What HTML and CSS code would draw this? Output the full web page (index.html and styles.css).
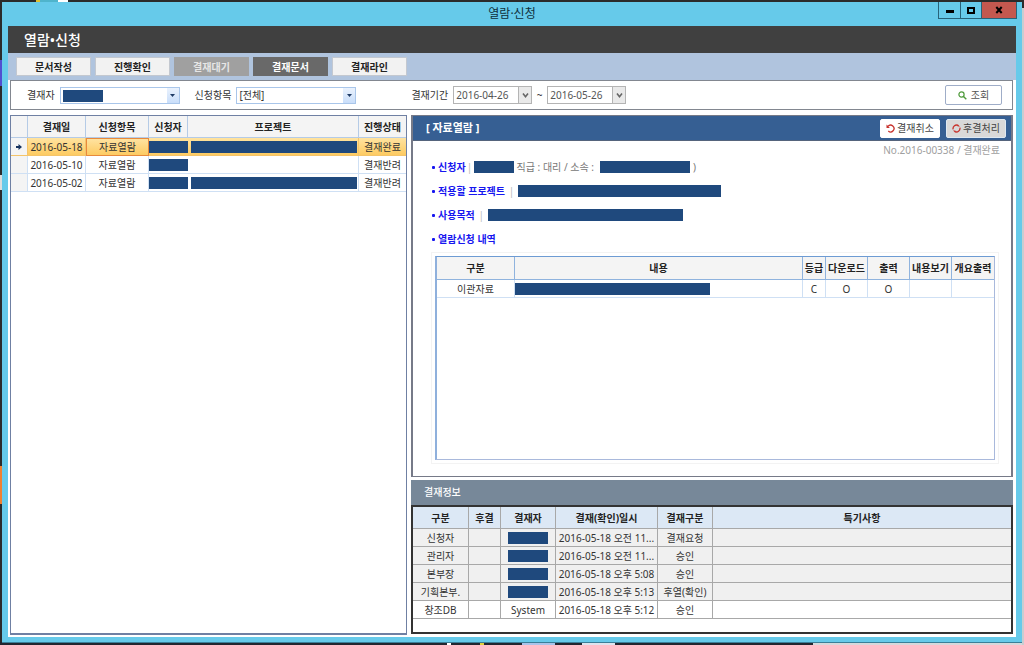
FILE: index.html
```html
<!DOCTYPE html>
<html lang="ko">
<head>
<meta charset="utf-8">
<title>열람·신청</title>
<link rel="stylesheet" href="styles.css">
</head>
<body>
<div class="window">
  <header class="titlebar">
    <span class="titlebar-text">열람·신청</span>
    <div class="caption">
      <button class="cap cap-min" aria-label="최소화"><svg width="8" height="8" viewBox="0 0 8 8"><rect y="4" width="8" height="3" fill="#000"/></svg></button>
      <button class="cap cap-max" aria-label="최대화"><svg width="8" height="7" viewBox="0 0 8 7"><rect x="1" y="1" width="6" height="5" fill="none" stroke="#000" stroke-width="2"/></svg></button>
      <button class="cap cap-close" aria-label="닫기"><svg width="8" height="8" viewBox="0 0 8 8"><path d="M1.300 1l5.400 6M6.700 1L1.300 7" stroke="#000" stroke-width="2"/></svg></button>
    </div>
  </header>
  <main class="client">
    <h1 class="page-title">열람•신청</h1>
    <nav class="tabs">
      <button class="tab">문서작성</button>
      <button class="tab">진행확인</button>
      <button class="tab tab-muted">결재대기</button>
      <button class="tab tab-active">결재문서</button>
      <button class="tab">결재라인</button>
    </nav>
    <div class="content">
      <form class="filter">
        <label for="approver">결재자</label>
        <span class="combo">
          <select id="approver"><option></option></select>
          <span class="redact redact-combo"></span>
          <span class="combo-arrow"><svg width="5" height="3" viewBox="0 0 5 3"><path d="M0 0h5L2.500 3z" fill="#1f3b66"/></svg></span>
        </span>
        <label class="label-item" for="item">신청항목</label>
        <span class="combo">
          <select id="item"><option>[전체]</option></select>
          <span class="combo-arrow"><svg width="5" height="3" viewBox="0 0 5 3"><path d="M0 0h5L2.500 3z" fill="#1f3b66"/></svg></span>
        </span>
        <label class="label-period" for="from">결재기간</label>
        <span class="date"><input id="from" value="2016-04-26"><button type="button" aria-label="시작일 선택"><svg width="7" height="5" viewBox="0 0 7 5"><path d="M1 .5l2.500 3.200L6 .5" fill="none" stroke="#666" stroke-width="1.600"/></svg></button></span>
        <span class="tilde">~</span>
        <span class="date"><input id="to" aria-label="종료일" value="2016-05-26"><button type="button" aria-label="종료일 선택"><svg width="7" height="5" viewBox="0 0 7 5"><path d="M1 .5l2.500 3.200L6 .5" fill="none" stroke="#666" stroke-width="1.600"/></svg></button></span>
        <button class="search" type="button"><svg width="9" height="9" viewBox="0 0 9 9"><circle cx="3.500" cy="3.500" r="2.600" fill="none" stroke="#4f9a3c" stroke-width="1.200"/><path d="M5.500 5.500L8.300 8.300" stroke="#4f9a3c" stroke-width="1.400"/></svg>조회</button>
      </form>
      <div class="split">
        <section class="list">
          <table class="grid list-grid">
            <colgroup><col class="w17"><col class="w58"><col class="w63"><col class="w39"><col><col class="w47"></colgroup>
            <thead><tr><th></th><th>결재일</th><th>신청항목</th><th>신청자</th><th>프로젝트</th><th>진행상태</th></tr></thead>
            <tbody>
              <tr class="selected"><td class="mark"><svg width="6" height="6" viewBox="0 0 6 6"><path d="M0 2h2.500V0L6 3 2.500 6V4H0z" fill="#16335f"/></svg></td><td>2016-05-18</td><td class="focus">자료열람</td><td class="block"><span class="redact"></span></td><td class="block block-inset"><span class="redact"></span></td><td>결재완료</td></tr>
              <tr><td class="mark"></td><td>2016-05-10</td><td>자료열람</td><td class="block"><span class="redact"></span></td><td></td><td>결재반려</td></tr>
              <tr><td class="mark"></td><td>2016-05-02</td><td>자료열람</td><td class="block"><span class="redact"></span></td><td class="block block-inset"><span class="redact"></span></td><td>결재반려</td></tr>
            </tbody>
          </table>
        </section>
        <div class="side">
          <section class="detail">
            <header class="detail-head">
              <h2>[ 자료열람 ]</h2>
              <button class="act"><svg width="9" height="9" viewBox="0 0 9 9"><path d="M2 2.300A3.400 3.400 0 1 1 2.300 7.100" fill="none" stroke="#c8322c" stroke-width="1.300"/><path d="M.5 .6v3.400h3.400z" fill="#c8322c"/></svg>결재취소</button>
              <button class="act act-gray"><svg width="9" height="9" viewBox="0 0 9 9"><path d="M1.100 5.300A3.500 3.500 0 0 1 6.200 1.500M7.900 3.700A3.500 3.500 0 0 1 2.800 7.500" fill="none" stroke="#c8322c" stroke-width="1.300"/><path d="M5.600 .3L8 2.600H5.600zM3.400 8.700L1 6.400h2.400z" fill="#c8322c"/></svg>후결처리</button>
            </header>
            <p class="doc-no">No.2016-00338 / 결재완료</p>
            <ul class="fields">
              <li><b>신청자</b><i>|</i><span class="redact r40"></span><span>직급 : 대리 / 소속 :</span><span class="redact r90"></span><span>)</span></li>
              <li><b>적용할 프로젝트</b><i>|</i><span class="redact r203"></span></li>
              <li><b>사용목적</b><i>|</i><span class="redact r195"></span></li>
              <li><b>열람신청 내역</b></li>
            </ul>
            <div class="items">
              <table class="grid items-grid">
                <colgroup><col class="w78"><col><col class="w23"><col class="w42"><col class="w42"><col class="w42"><col class="w42"></colgroup>
                <thead><tr><th>구분</th><th>내용</th><th>등급</th><th>다운로드</th><th>출력</th><th>내용보기</th><th>개요출력</th></tr></thead>
                <tbody><tr><td>이관자료</td><td class="block"><span class="redact r195"></span></td><td>C</td><td>O</td><td>O</td><td></td><td></td></tr></tbody>
              </table>
            </div>
          </section>
          <section class="approval">
            <h2>결재정보</h2>
            <div class="approval-body">
              <table class="grid approval-grid">
                <colgroup><col class="w56"><col class="w32"><col class="w55"><col class="w102"><col class="w55"><col></colgroup>
                <thead><tr><th>구분</th><th>후결</th><th>결재자</th><th>결재(확인)일시</th><th>결재구분</th><th>특기사항</th></tr></thead>
                <tbody>
                  <tr><td>신청자</td><td></td><td class="block"><span class="redact r40 mid"></span></td><td>2016-05-18 오전 11...</td><td>결재요청</td><td></td></tr>
                  <tr><td>관리자</td><td></td><td class="block"><span class="redact r40 mid"></span></td><td>2016-05-18 오전 11...</td><td>승인</td><td></td></tr>
                  <tr><td>본부장</td><td></td><td class="block"><span class="redact r40 mid"></span></td><td>2016-05-18 오후 5:08</td><td>승인</td><td></td></tr>
                  <tr><td>기획본부.</td><td></td><td class="block"><span class="redact r40 mid"></span></td><td>2016-05-18 오후 5:13</td><td>후열(확인)</td><td></td></tr>
                  <tr class="last"><td>창조DB</td><td></td><td>System</td><td>2016-05-18 오후 5:12</td><td>승인</td><td></td></tr>
                </tbody>
              </table>
            </div>
          </section>
        </div>
      </div>
    </div>
  </main>
</div>
</body>
</html>
```
FILE: styles.css
```css
* { box-sizing: border-box; }

body {
  margin: 0;
  min-height: 100vh;
  display: flex;
  padding: 2px;
  background:
    linear-gradient(90deg, transparent 36px, #e0c030 36px 40px, #4fb4cc 40px 58px, #fff 58px 68px, transparent 68px) 0 0 / 100% 2px no-repeat,
    linear-gradient(#2b2b2b 8px, #c9cdd0 8px) 100% 0 / 2px 100% no-repeat,
    linear-gradient(90deg, #222630 447px, #fff 447px 451px, #222630 451px 480px, #e0d040 480px 484px, #222630 484px 522px, #a8c4ea 522px 555px, #222630 555px 582px, #dde4ee 582px 615px, #222630 615px 813px, #d5d9dc 813px) 0 100% / 100% 3px no-repeat,
    linear-gradient(#2b2b2b 60px, #5050d0 60px 86px, #2b2b2b 86px 175px, #ddd 175px 190px, #2b2b2b 190px 466px, #f08030 466px 504px, #2b2b2b 504px);
  font: 10px/14px "Noto Sans", "Noto Sans CJK KR", sans-serif;
  color: #333;
}

button, input, select { font: inherit; color: inherit; margin: 0; padding: 0; border-radius: 0; }
button { display: flex; align-items: center; justify-content: center; }
h1, h2, p, ul { margin: 0; padding: 0; }

.window {
  flex: 1;
  display: flex;
  flex-direction: column;
  padding: 0 6px 5px;
  background: #66caea;
  border-bottom: 1px solid #3a7f98;
}

.titlebar { position: relative; height: 24px; text-align: center; }
.titlebar-text { font-size: 12px; line-height: 24px; color: #10303c; }
.caption { position: absolute; top: 0; right: -1px; display: flex; height: 17px; border: 1px solid #28637a; border-top: 0; }
.cap { width: 22px; border: 0; border-right: 1px solid #28637a; background: #66caea; }
.cap-max { width: 21px; }
.cap-close { width: 34px; border: 0; background: #c4584f; }

.client { flex: 1; display: flex; flex-direction: column; background: #fff; }
.page-title { padding-left: 16px; background: #404040; color: #fff; font-size: 14px; line-height: 27px; font-weight: 500; }

.tabs { display: flex; gap: 4px; padding: 4px 8px; background: #b0c4de; }
.tab { width: 75px; height: 19px; border: 1px solid #c3c8d0; background: #f2f2f2; color: #222; font-weight: bold; }
.tab-muted { background: #a0a0a0; border-color: #a0a0a0; color: #e6e6e6; }
.tab-active { background: #696969; border-color: #696969; color: #fff; }

.content { flex: 1; display: flex; flex-direction: column; gap: 5px; padding: 0 3px 2px 2px; }

.filter { display: flex; align-items: center; height: 30px; padding: 0 10px 0 16px; border: 1px solid #828790; }
.combo { position: relative; display: flex; width: 120px; height: 17px; margin-left: 5px; }
.combo select { width: 100%; padding-left: 2px; appearance: none; border: 1px solid #a9c6ea; background: #fff; }
.combo-arrow { position: absolute; right: 1px; top: 1px; bottom: 1px; width: 12px; display: flex; align-items: center; justify-content: center; background: linear-gradient(#eaf2fd, #c9defa); pointer-events: none; }
.label-item { margin-left: 15px; }
.label-period { margin-left: 55px; }
.date { display: flex; width: 79px; height: 18px; border: 1px solid #b4b4b4; }
.label-period + .date { margin-left: 5px; }
.date input { flex: 1; min-width: 0; padding-left: 2px; border: 0; color: #555; background: #fff; }
.date button { width: 13px; border: 0; border-left: 1px solid #b4b4b4; background: #e9e9e9; }
.tilde { width: 15px; text-align: center; }
.search { gap: 4px; width: 57px; height: 20px; margin-left: auto; border: 1px solid #9fadc8; border-radius: 2px; background: #fff; color: #555; }

.redact { display: block; height: 12px; background: #1f497d; }
.redact-combo { position: absolute; left: 3px; top: 3px; width: 40px; pointer-events: none; }
.r40 { width: 40px; }
.r90 { width: 90px; }
.r195 { width: 195px; }
.r203 { width: 203px; }
.mid { margin: 0 auto; }

.split { flex: 1; display: grid; grid-template-columns: 397fr 602fr; gap: 4px; }
.list { border: 1px solid #6f80a3; border-width: 1px 1px 2px 1px; }

.grid { width: 100%; table-layout: fixed; border-collapse: separate; border-spacing: 0; }
.grid th, .grid td { padding: 0; overflow: hidden; white-space: nowrap; text-align: center; border: solid #cfe0f4; border-width: 0 1px 1px 0; }
.grid th { height: 22px; color: #222; }
.grid td { height: 18px; }
.grid tr > :last-child { border-right: 0; }
.grid .mark { background: #f4f4f4; }
.grid .mark svg { display: block; margin: 0 auto; }
.w17 { width: 17px; } .w23 { width: 23px; } .w32 { width: 32px; } .w39 { width: 39px; }
.w42 { width: 42px; } .w47 { width: 47px; } .w55 { width: 55px; } .w56 { width: 56px; }
.w58 { width: 58px; } .w63 { width: 63px; } .w78 { width: 78px; } .w102 { width: 102px; }

.list-grid th { background: #f4f4f4; border-color: #b5cbe6; }
.list-grid .block { border-right-width: 0; }
.list-grid .block-inset { padding: 0 1px 0 3px; border-right-width: 1px; }
.selected td { background: linear-gradient(#ffe3a0, #fdcb62); border-color: #f4c46a; }
.selected .focus { border: 1px solid #e88a3c; }

.side { display: flex; flex-direction: column; gap: 3px; min-width: 0; padding-bottom: 1px; }
.detail { flex: 1; display: flex; flex-direction: column; border: 1px solid #767a88; border-left-width: 2px; border-right-width: 2px; }
.detail-head { display: flex; align-items: center; gap: 6px; height: 25px; padding: 0 5px 0 13px; background: #365f93; border-bottom: 1px solid #55647c; }
.detail-head h2 { margin-right: auto; color: #fff; font-size: 11px; }
.act { gap: 2px; width: 60px; height: 19px; border: 1px solid #fff; border-radius: 2px; background: #fff; color: #444; }
.act-gray { background: #d9d9d9; border-color: #dfe9f2; }
.doc-no { padding: 4px 11px 0; text-align: right; line-height: 10px; color: #a0a0a0; }

.fields { list-style: none; padding-left: 19px; }
.fields li { display: flex; align-items: center; height: 24px; color: #777; }
.fields li::before { content: ""; width: 3px; height: 3px; margin-right: 3px; border-radius: 1px; background: #1616f0; }
.fields b { color: #1616f0; }
.fields i { width: 13px; text-align: center; font-style: normal; color: #bbb; }
.fields li:first-child i { width: 8px; }
.fields .r40, .fields .r90 { margin-right: 3px; }
.fields .r90 { margin-left: 6px; }

.items { flex: 1; margin: 5px 16px 16px 22px; border: 1px solid #a9b9dc; border-top-color: #6d9bd3; border-left: 2px solid #8fb0dc; outline: 1px solid #f3f3f3; outline-offset: 3px; }
.items-grid th { height: 23px; background: #f4f4f4; border-color: #8fb3de; }

.approval h2 { height: 25px; padding-left: 13px; background: #778899; color: #fff; font-size: 10px; line-height: 25px; font-weight: 500; }
.approval-body { padding: 0 0 13px; border: 2px solid #333; }
.approval-grid th, .approval-grid td { border-color: #a8a8a8; }
.approval-grid th { background: #dce8f5; }
.approval-grid td { background: #f0f0f0; }
.approval-grid .last td { background: #fff; }
```
